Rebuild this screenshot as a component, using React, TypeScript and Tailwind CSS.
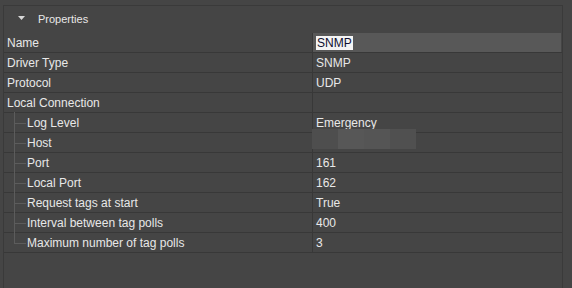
import React from 'react';

type Row = { label: string; value: string; child?: boolean; last?: boolean; selected?: boolean; blurred?: boolean };

const rows: Row[] = [
  { label: 'Name', value: 'SNMP', selected: true },
  { label: 'Driver Type', value: 'SNMP' },
  { label: 'Protocol', value: 'UDP' },
  { label: 'Local Connection', value: '' },
  { label: 'Log Level', value: 'Emergency', child: true },
  { label: 'Host', value: '', child: true, blurred: true },
  { label: 'Port', value: '161', child: true },
  { label: 'Local Port', value: '162', child: true },
  { label: 'Request tags at start', value: 'True', child: true },
  { label: 'Interval between tag polls', value: '400', child: true },
  { label: 'Maximum number of tag polls', value: '3', child: true, last: true },
];

function PropertyRow({ row }: { row: Row }) {
  return (
    <div className="flex h-[20px] border-b border-[#383838]">
      <div className="relative flex w-[309px] shrink-0 items-center border-r border-[#383838] pl-[3px]">
        {row.child && (
          <>
            {/* tree connector */}
            <span
              className={`absolute left-[10px] top-[-1px] w-px bg-[#5c5c5c] ${row.last ? 'h-[11px]' : 'h-[21px]'}`}
            />
            <span className="absolute left-[10px] top-[10px] h-px w-[12px] bg-[#5c5c5c]" />
          </>
        )}
        <span className={row.child ? 'pl-[20px]' : ''}>{row.label}</span>
      </div>
      <div
        className={`relative flex w-[248px] items-center pl-[3px] ${row.selected ? 'bg-[#585858]' : ''}`}
      >
        {row.selected ? (
          <span className="bg-[#f4f4f4] px-[1px] leading-[14px] text-[#101030]">{row.value}</span>
        ) : (
          <span>{row.value}</span>
        )}
        {row.blurred && (
          <div className="absolute left-[-1px] top-[-4px] flex h-[20px]">
            <span className="w-[26px] bg-[#4e4e4e]" />
            <span className="w-[26px] bg-[#575757]" />
            <span className="w-[26px] bg-[#555555]" />
            <span className="w-[26px] bg-[#505050]" />
          </div>
        )}
      </div>
    </div>
  );
}

export default function App() {
  return (
    <div className="h-[288px] w-[572px] overflow-hidden bg-[#454545] pl-[3px] pt-[5px] font-['Liberation_Sans',sans-serif] text-[12px] text-[#e8e8e8]">
      <div className="h-[283px] w-[560px] border-l border-r border-t border-[#3a3a3a]">
        <div className="flex h-[27px] items-center">
          <svg width="7" height="5" viewBox="0 0 7 5" className="ml-[14px] mt-[-3px]">
            <path d="M0 0 L7 0 L3.5 4 Z" fill="#d8d8d8" />
          </svg>
          <span className="ml-[13px] text-[11px]">Properties</span>
        </div>
        {rows.map((row) => (
          <PropertyRow key={row.label} row={row} />
        ))}
      </div>
    </div>
  );
}
